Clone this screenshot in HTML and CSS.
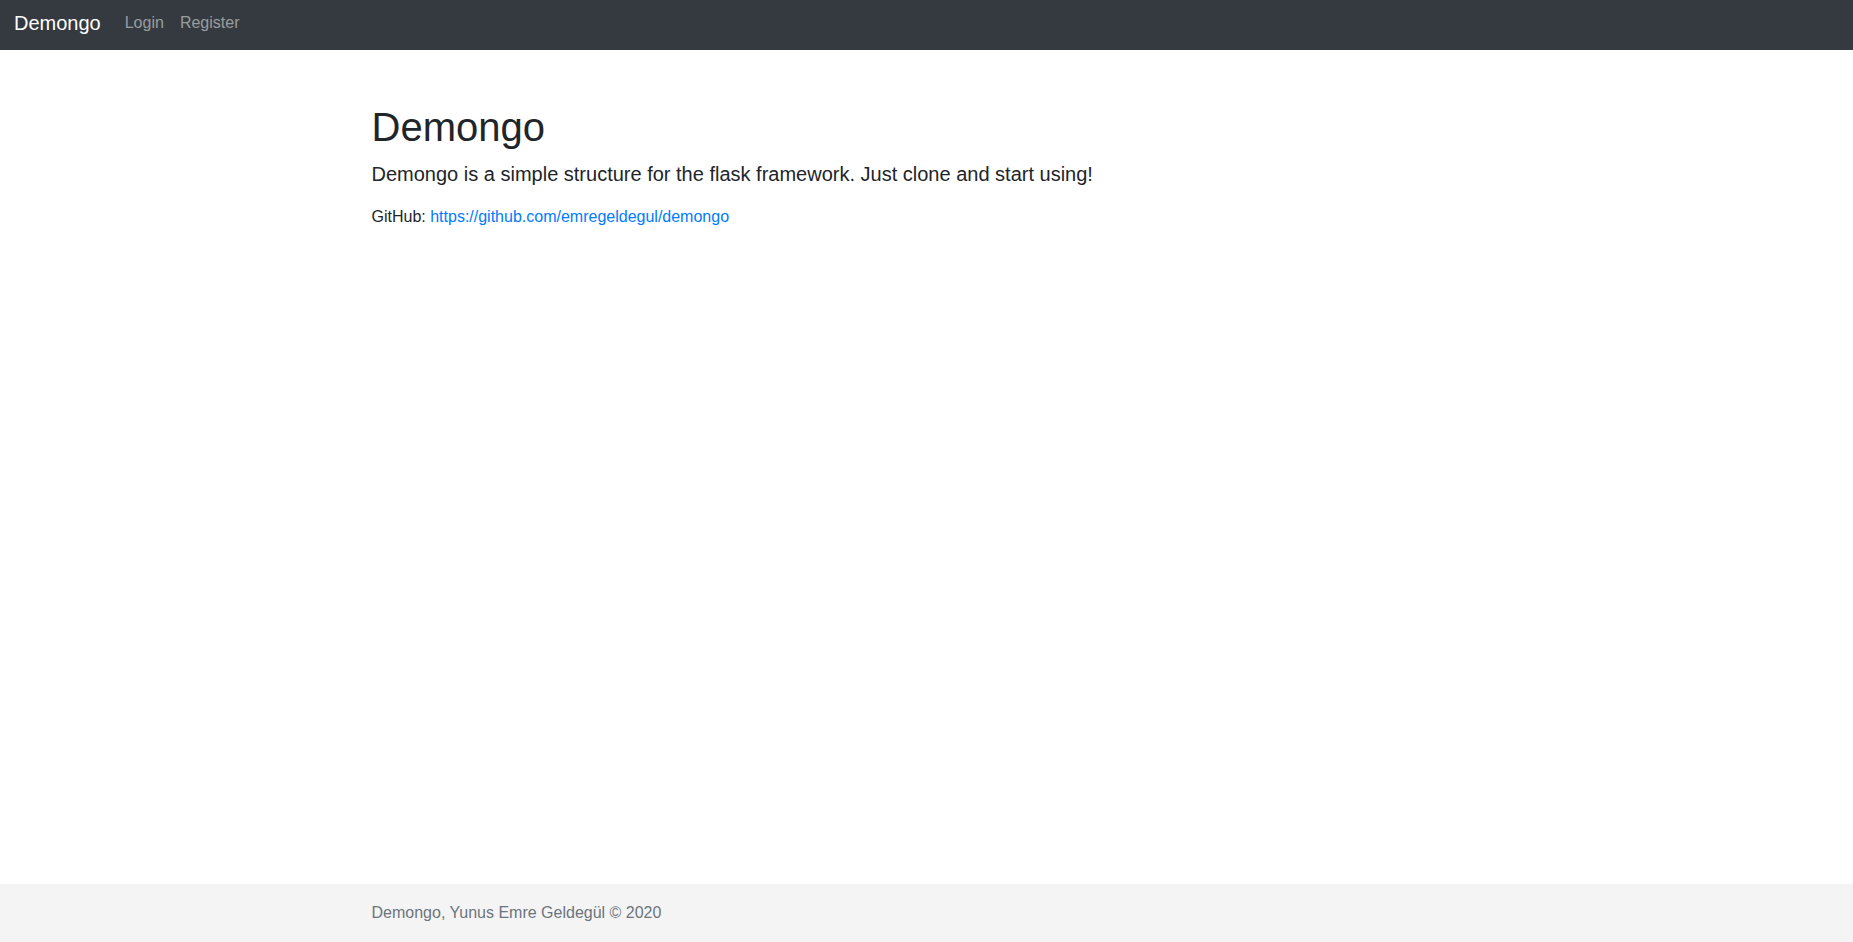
FILE: index.html
```html
<!DOCTYPE html>
<html lang="en">
<head>
<meta charset="utf-8">
<title>Demongo</title>
<link rel="stylesheet" href="styles.css">
</head>
<body>
<div class="page">
  <nav class="navbar">
    <a class="brand" href="#">Demongo</a>
    <ul class="nav">
      <li><a class="nav-link" href="#">Login</a></li>
      <li><a class="nav-link" href="#">Register</a></li>
    </ul>
  </nav>
  <main class="container main">
    <h1 class="title">Demongo</h1>
    <p class="lead">Demongo is a simple structure for the flask framework. Just clone and start using!</p>
    <p class="github">GitHub: <a href="#" class="link">https://github.com/emregeldegul/demongo</a></p>
  </main>
  <footer class="footer">
    <div class="container">
      <span class="muted">Demongo, Yunus Emre Geldegül © 2020</span>
    </div>
  </footer>
</div>
</body>
</html>
```
FILE: styles.css
```css
* { box-sizing: border-box; }
html, body {
  margin: 0;
  padding: 0;
}
body {
  font-family: "Liberation Sans", Arial, sans-serif;
  font-size: 16px;
  line-height: 1.5;
  color: #212529;
  background: #fff;
}
.page {
  min-height: 100vh;
  display: flex;
  flex-direction: column;
}
.navbar {
  height: 50px;
  background: #343a40;
  display: flex;
  align-items: center;
  padding: 0 14px;
}
.brand {
  font-size: 20px;
  line-height: 30px;
  color: #fff;
  text-decoration: none;
  margin-right: 16px;
  position: relative;
  top: -2px;
}
.nav {
  list-style: none;
  margin: 0;
  padding: 0;
  display: flex;
}
.nav-link {
  display: block;
  padding: 0 8px;
  color: rgba(255, 255, 255, 0.5);
  text-decoration: none;
  line-height: 24px;
  position: relative;
  top: -2px;
}
.container {
  width: 1140px;
  margin: 0 auto;
  padding: 0 15px;
}
.main {
  padding-top: 53px;
  flex: 1;
}
.title {
  font-size: 40px;
  font-weight: 500;
  line-height: 1.2;
  margin: 0 0 8px;
}
.lead {
  font-size: 20px;
  font-weight: 300;
  line-height: 1.5;
  margin: 0 0 16px;
}
.github {
  margin: 0;
}
.link {
  color: #007bff;
  text-decoration: none;
}
.footer {
  height: 58px;
  line-height: 58px;
  background: #f4f4f4;
}
.muted {
  color: #6c757d;
}
```
